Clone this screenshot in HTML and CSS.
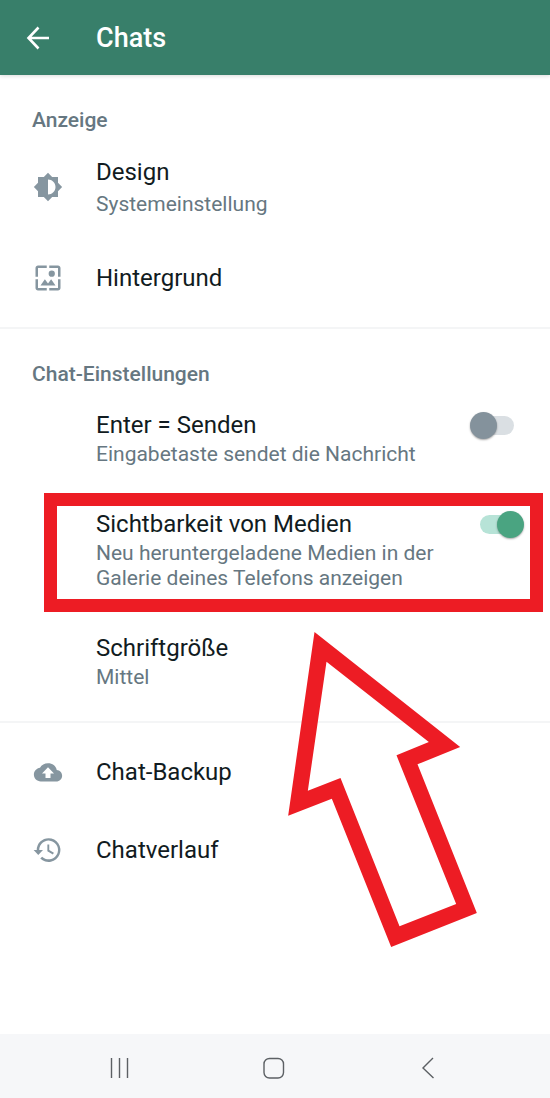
FILE: index.html
```html
<!DOCTYPE html>
<html lang="de">
<head>
<meta charset="utf-8">
<meta name="viewport" content="width=device-width, initial-scale=1">
<title>Chats</title>
<link rel="stylesheet" href="styles.css">
</head>
<body>
<header class="app-bar">
  <button class="back" type="button" aria-label="Zurück">
    <svg class="back-icon" viewBox="0 0 24 24" fill="none" stroke="currentColor" stroke-width="2.6"><path d="M23 12H3M12.500 1.500L2.500 12l10 10.500"/></svg>
  </button>
  <h1 class="app-title">Chats</h1>
</header>

<main class="settings">
  <section class="group">
    <h2 class="group-title">Anzeige</h2>
    <a class="row row-roomy" href="#design">
      <svg class="icon" viewBox="0 0 24 24"><path fill="currentColor" fill-rule="evenodd" d="M20 8.690V4h-4.690L12 .69 8.690 4H4v4.690L.69 12 4 15.310V20h4.690L12 23.310 15.310 20H20v-4.690L23.310 12zM12 18V6c3.310 0 6 2.690 6 6s-2.690 6-6 6z"/></svg>
      <span class="text"><span class="label">Design</span><span class="hint">Systemeinstellung</span></span>
    </a>
    <a class="row row-single" href="#hintergrund">
      <svg class="icon" viewBox="0 0 24 24"><path fill="currentColor" d="M4 4h7V2H4c-1.100 0-2 .9-2 2v7h2V4zM9.500 13L6 18h12l-3.500-5-2.500 3.300zM17.500 8.500a2.500 2.500 0 1 0-5 0 2.500 2.500 0 0 0 5 0zM20 2h-7v2h7v7h2V4c0-1.100-.9-2-2-2zM20 20h-7v2h7c1.100 0 2-.9 2-2v-7h-2v7zM4 13H2v7c0 1.100.9 2 2 2h7v-2H4v-7z"/></svg>
      <span class="label">Hintergrund</span>
    </a>
  </section>

  <section class="group">
    <h2 class="group-title">Chat-Einstellungen</h2>
    <div class="row">
      <label class="text" for="enter"><span class="label">Enter = Senden</span><span class="hint">Eingabetaste sendet die Nachricht</span></label>
      <input class="switch" id="enter" type="checkbox" role="switch">
    </div>
    <div class="row row-marked">
      <label class="text" for="media"><span class="label">Sichtbarkeit von Medien</span><span class="hint">Neu heruntergeladene Medien in der Galerie deines Telefons anzeigen</span></label>
      <input class="switch" id="media" type="checkbox" role="switch" checked>
      <span class="marker"></span>
      <svg class="pointer" viewBox="54 35 566 945"><path fill="currentColor" fill-rule="evenodd" d="M133 35L570 380 442 432 620 878 363 980 185 535 54 586zM169 124L113 511 211 473 388 918 558 851 379 405 476 365z"/></svg>
    </div>
    <a class="row" href="#schrift">
      <span class="text"><span class="label">Schriftgröße</span><span class="hint">Mittel</span></span>
    </a>
  </section>

  <section class="group group-plain">
    <a class="row row-single" href="#backup">
      <svg class="icon" viewBox="0 0 24 24"><path fill="currentColor" d="M19 10.400C18.400 7.100 15.500 5 12 5 9.200 5 6.800 6.300 5.600 8.600 2.900 8.900.7 11.200.7 14c0 3.100 2.500 5.500 5.500 5.500h12.400c2.600 0 4.700-2 4.700-4.600 0-2.400-1.900-4.300-4.300-4.500zM14 13.200v3.600h-4v-3.600H7.200L12 8.200l4.800 5H14z"/></svg>
      <span class="label">Chat-Backup</span>
    </a>
    <a class="row row-single" href="#verlauf">
      <svg class="icon" viewBox="0 0 24 24"><path fill="currentColor" d="M12.500 2.500A9.500 9.500 0 0 0 3 12H.5l3.700 4 3.800-4H5a7.500 7.500 0 1 1 2.300 5.400l-1.500 1.400A9.500 9.500 0 1 0 12.500 2.500zM11.500 7.500v5.400l4.400 2.600.8-1.300-3.700-2.200V7.500z"/></svg>
      <span class="label">Chatverlauf</span>
    </a>
  </section>
</main>

<nav class="system-nav" aria-label="Navigation">
  <button class="nav-button" type="button" aria-label="Letzte Apps"><svg class="nav-icon" viewBox="0 0 24 24"><path d="M3.500 2v20M11.500 2v20M19.500 2v20"/></svg></button>
  <button class="nav-button" type="button" aria-label="Startseite"><svg class="nav-icon" viewBox="0 0 24 24"><rect x="2" y="2.500" width="19.500" height="19.500" rx="5.500"/></svg></button>
  <button class="nav-button" type="button" aria-label="Zurück"><svg class="nav-icon" viewBox="0 0 24 24"><path d="M17 2L7 12l10.500 10"/></svg></button>
</nav>
</body>
</html>
```
FILE: styles.css
```css
* {
  box-sizing: border-box;
}

body {
  margin: 0;
  min-height: 100vh;
  display: flex;
  flex-direction: column;
  background: #fff;
  color: #111b21;
  font-family: Roboto, "Liberation Sans", sans-serif;
}

button {
  display: flex;
  align-items: center;
  justify-content: center;
  border: 0;
  padding: 0;
  background: none;
  color: inherit;
}

.app-bar {
  display: flex;
  align-items: center;
  gap: 46px;
  height: 75px;
  padding: 0 26px;
  background: #387f6a;
  color: #fff;
  box-shadow: 0 1px 4px rgb(0 0 0 / 15%);
}

.back-icon {
  display: block;
  width: 24px;
  height: 24px;
}

.app-title {
  margin: 0;
  font-size: 27px;
  line-height: 32px;
  font-weight: 500;
}

.settings {
  flex: 1;
}

.group {
  padding: 30px 0 10px;
}

.group + .group {
  border-top: 2px solid #f4f5f6;
}

.group-plain {
  padding-top: 10px;
}

.group-title {
  margin: 0;
  padding: 0 32px;
  color: #667781;
  font-size: 21px;
  line-height: 30px;
  font-weight: 500;
}

.row {
  position: relative;
  display: flex;
  align-items: flex-start;
  padding: 21px 26px 21px 96px;
  color: inherit;
  text-decoration: none;
}

.row-roomy,
.row-single {
  align-items: center;
  gap: 33px;
  padding-left: 33px;
}

.row-roomy {
  padding-top: 22px;
  padding-bottom: 22px;
}

.row-single {
  padding-top: 24px;
  padding-bottom: 24px;
}

.text {
  flex: 1;
  display: flex;
  flex-direction: column;
  gap: 2px;
}

.row-roomy .text {
  gap: 5px;
}

.label {
  font-size: 24px;
  line-height: 30px;
}

.hint {
  max-width: 350px;
  color: #667781;
  font-size: 21px;
  line-height: 25px;
}

.icon {
  flex: none;
  width: 30px;
  height: 30px;
  color: #8696a0;
}

.switch {
  appearance: none;
  flex: none;
  display: flex;
  align-items: center;
  width: 54px;
  height: 30px;
  margin: 0;
}

.switch::before {
  content: "";
  position: absolute;
  width: 34px;
  height: 19px;
  margin-left: 10px;
  border-radius: 10px;
  background: #dadfe3;
}

.switch::after {
  content: "";
  position: relative;
  width: 27px;
  height: 27px;
  border-radius: 50%;
  background: #84929c;
  box-shadow: 0 1px 2px rgb(0 0 0 / 35%);
}

.switch:checked {
  justify-content: flex-end;
}

.switch:checked::before {
  right: 36px;
  background: #b7e3d7;
}

.switch:checked::after {
  background: #4aa481;
}

.marker {
  position: absolute;
  inset: 5px 7px 0 44px;
  border: 13px solid #ed1c24;
  pointer-events: none;
}

.pointer {
  position: absolute;
  z-index: 1;
  top: 144px;
  left: 288px;
  width: 189px;
  height: 315px;
  color: #ed1c24;
  pointer-events: none;
}

.system-nav {
  display: flex;
  justify-content: center;
  gap: 130px;
  height: 64px;
  padding-right: 3px;
  padding-top: 4px;
  background: #f6f7f9;
  color: #5c6064;
}

.nav-icon {
  display: block;
  width: 24px;
  height: 24px;
  fill: none;
  stroke: currentColor;
  stroke-width: 1.400;
}
```
